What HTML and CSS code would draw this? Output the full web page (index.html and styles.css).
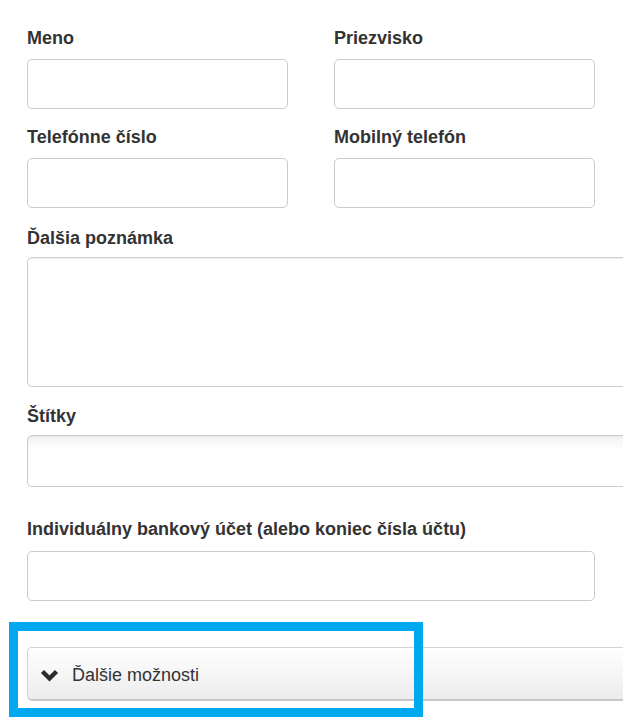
FILE: index.html
```
<!DOCTYPE html>
<html lang="sk">
<head>
<meta charset="utf-8">
<link rel="stylesheet" href="styles.css">
</head>
<body>
<div class="page">
<div class="form">
  <div class="row">
    <div class="field f1">
      <label class="lbl">Meno</label>
      <input class="inp" type="text">
    </div>
    <div class="field f1">
      <label class="lbl">Priezvisko</label>
      <input class="inp" type="text">
    </div>
  </div>
  <div class="row">
    <div class="field f2">
      <label class="lbl">Telefónne číslo</label>
      <input class="inp" type="text">
    </div>
    <div class="field f2">
      <label class="lbl">Mobilný telefón</label>
      <input class="inp" type="text">
    </div>
  </div>
  <div class="field f3">
    <label class="lbl">Ďalšia poznámka</label>
    <textarea class="area"></textarea>
  </div>
  <div class="field f4">
    <label class="lbl">Štítky</label>
    <div class="tags"></div>
  </div>
  <div class="field f5">
    <label class="lbl">Individuálny bankový účet (alebo koniec čísla účtu)</label>
    <input class="inp wide" type="text">
  </div>
  <button class="more" type="button">
    <svg class="chev" width="19" height="13" viewBox="0 0 19 13"><polyline points="2.5,2.5 9.5,9.5 16.5,2.5" fill="none" stroke="#2b2b2b" stroke-width="4.4" stroke-linecap="butt" stroke-linejoin="miter"/></svg>
    <span class="more-text">Ďalšie možnosti</span>
  </button>
</div>
<div class="highlight"></div>
</div>
</body>
</html>
```
FILE: styles.css
```
html, body {
  margin: 0;
  padding: 0;
  background: #fff;
}
.page {
  width: 623px;
  height: 722px;
  position: relative;
  overflow: hidden;
  font-family: "Liberation Sans", Arial, sans-serif;
  color: #333;
}
.form {
  padding: 28px 0 0 27px;
}
.row {
  display: grid;
  grid-template-columns: 261px 261px;
  column-gap: 46px;
}
.field {
  display: flex;
  flex-direction: column;
}
.lbl {
  font-size: 18px;
  font-weight: bold;
  line-height: 20px;
  margin-bottom: 11px;
  white-space: nowrap;
  color: #333;
}
.f1 { margin-bottom: 18px; }
.f2 { margin-bottom: 20px; }
.f3 { margin-bottom: 19px; }
.f3 .lbl { margin-bottom: 9px; }
.f4 { margin-bottom: 32px; }
.f4 .lbl { margin-bottom: 9px; }
.f5 { margin-bottom: 46px; }
.f5 .lbl { margin-bottom: 12px; }
.inp {
  box-sizing: border-box;
  width: 261px;
  height: 50px;
  border: 1px solid #cccccc;
  border-radius: 5px;
  background: #fff;
  margin: 0;
  padding: 6px 12px;
  font: inherit;
}
.inp.wide { width: 568px; }
.area {
  box-sizing: border-box;
  width: 640px;
  height: 130px;
  border: 1px solid #cccccc;
  border-radius: 5px;
  box-shadow: inset 0 1px 1px rgba(0,0,0,0.075);
  margin: 0;
  padding: 6px 12px;
  resize: none;
  font: inherit;
}
.tags {
  box-sizing: border-box;
  width: 640px;
  height: 52px;
  border: 1px solid #cccccc;
  border-radius: 5px;
  background: linear-gradient(#f2f2f2 0, #ffffff 14px);
  box-shadow: inset 0 1px 2px rgba(0,0,0,0.06);
}
.more {
  box-sizing: border-box;
  width: 640px;
  height: 54px;
  display: flex;
  align-items: center;
  gap: 13px;
  padding: 4px 0 0 12px;
  margin: 0;
  border: 1px solid #d4d4d4;
  border-bottom: 2px solid #c8c8c8;
  border-radius: 5px;
  background: linear-gradient(#ffffff, #ececec);
  font-family: "Liberation Sans", Arial, sans-serif;
  font-size: 18px;
  color: #333;
  text-align: left;
}
.chev { display: block; }
.highlight {
  position: absolute;
  left: 9px;
  top: 622px;
  width: 414px;
  height: 95px;
  box-sizing: border-box;
  border: 9px solid #00a8f0;
}
```
